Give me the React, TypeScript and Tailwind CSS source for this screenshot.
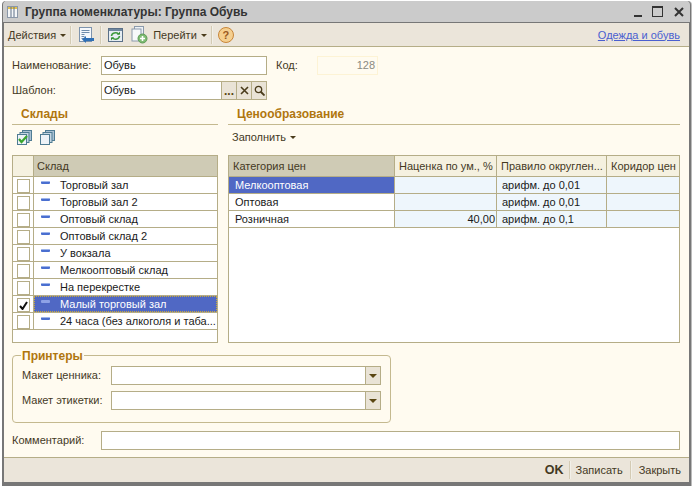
import * as React from "react";

const stores = [
  "Торговый зал",
  "Торговый зал 2",
  "Оптовый склад",
  "Оптовый склад 2",
  "У вокзала",
  "Мелкооптовый склад",
  "На перекрестке",
  "Малый торговый зал",
  "24 часа (без алкоголя и таба...",
];

const prices = [
  { name: "Мелкооптовая", markup: "", rule: "арифм. до 0,01" },
  { name: "Оптовая", markup: "", rule: "арифм. до 0,01" },
  { name: "Розничная", markup: "40,00", rule: "арифм. до 0,1" },
];

function Caret() {
  return <span className="inline-block ml-[4px] mb-[2px] border-x-[3px] border-t-[3px] border-x-transparent border-t-[#4a3c1c]" />;
}

function Sep() {
  return <span className="block w-[2px] h-[18px] bg-[#d4cbb4] border-r border-white/70" />;
}

function TitleIcon() {
  return (
    <svg width="11" height="12" viewBox="0 0 11 12">
      <rect x="0.5" y="0.5" width="10" height="11" fill="#f4f6f8" stroke="#8a97a8" />
      <rect x="1" y="1" width="9" height="2" fill="#e6c24a" />
      <path d="M4 1v10M7 1v10" stroke="#5f7088" />
    </svg>
  );
}

function ListArrowIcon() {
  return (
    <svg width="17" height="17" viewBox="0 0 17 17">
      <rect x="1.5" y="0.5" width="12" height="14" fill="#f5f8fc" stroke="#7d93ad" />
      <path d="M3.5 3.5h8M3.5 5.5h8M3.5 7.5h3M3.5 9.5h3M3.5 11.5h3" stroke="#6f8cab" />
      <path d="M4 12.5l4-3.5v2h8v3H8v2z" fill="#2f6fb5" />
    </svg>
  );
}

function RefreshIcon() {
  return (
    <svg width="15" height="14" viewBox="0 0 15 14">
      <rect x="0.5" y="0.5" width="14" height="13" fill="#e6edf3" stroke="#5b7088" />
      <rect x="1" y="1" width="13" height="2" fill="#6f879f" />
      <path d="M3.5 8a4 3.5 0 0 1 7-2" fill="none" stroke="#3c9a3c" strokeWidth="1.6" />
      <path d="M11.5 8a4 3.5 0 0 1-7 2" fill="none" stroke="#3c9a3c" strokeWidth="1.6" />
      <path d="M9 7l3-0.5 0-3zM6 9l-3 0.5 0 3z" fill="#2f8a2f" />
    </svg>
  );
}

function NewDocIcon() {
  return (
    <svg width="17" height="18" viewBox="0 0 17 18">
      <rect x="3.5" y="0.5" width="9" height="12" fill="#eef2f6" stroke="#8b9aab" />
      <rect x="1" y="3" width="9" height="12" fill="#f7f9fb" stroke="#8b9aab" />
      <circle cx="11.5" cy="12.5" r="4.5" fill="#7dbb72" stroke="#5d9a55" />
      <path d="M9 12.5h5M11.5 10v5" stroke="#fff" strokeWidth="1.6" />
    </svg>
  );
}

function HelpIcon() {
  return (
    <span className="w-[16px] h-[16px] rounded-full bg-[#f5cf8f] border border-[#c8863a] flex items-center justify-center text-[11px] font-bold text-[#9a5a1e] leading-none">
      ?
    </span>
  );
}

function StackIcon({ checked }: { checked?: boolean }) {
  return (
    <svg width="15" height="15" viewBox="0 0 15 15">
      <rect x="5.5" y="0.5" width="9" height="10" fill="#a9c0d2" stroke="#4f7c93" />
      <rect x="3" y="2.5" width="9" height="10" fill="#c5d6e2" stroke="#4f7c93" />
      <rect x="0.5" y="4.5" width="9" height="10" fill="#eef3f7" stroke="#4f7c93" />
      {checked && <path d="M2 9l2.5 3L10 6" fill="none" stroke="#3aa52f" strokeWidth="2.2" />}
    </svg>
  );
}

function Dash({ light }: { light?: boolean }) {
  return (
    <span
      className={`block shrink-0 w-[9px] h-[3px] mt-[-5px] rounded-[1px] ${light ? "bg-[#8ea2e6]" : "bg-[#4a6fd0] border-t border-[#9db4ea]"}`}
    />
  );
}

function Input({ className = "", value = "" }: { className?: string; value?: string }) {
  return (
    <div className={`h-[19px] bg-white border border-[#b5ad87] pl-[2px] flex items-center text-[#1a1a1a] ${className}`}>{value}</div>
  );
}

function SelectField({ label }: { label: string }) {
  return (
    <div className="flex items-center h-[19px]">
      <span className="w-[89px] shrink-0">{label}</span>
      <div className="w-[270px] h-[19px] bg-white border border-[#b5ad87] flex justify-end">
        <span className="w-[15px] bg-[#e9e3d6] border-l border-[#b5ad87] flex items-center justify-center">
          <span className="border-x-[4px] border-t-[4px] border-x-transparent border-t-[#5a4612]" />
        </span>
      </div>
    </div>
  );
}

export default function App() {
  return (
    <div
      className="w-[692px] h-[486px] bg-white pt-px pl-[2px] pr-px text-[11px] leading-none text-[#44391f]"
      style={{ fontFamily: '"Liberation Sans", Arial, sans-serif' }}
    >
      <div className="h-full flex flex-col rounded-t-[4px] bg-[#cbcbcb] border-x-[2px] border-b-[4px] border-[#777] border-t-0 shadow-[1px_0_0_#bbb]">
        <div className="h-[21px] -mx-[1px] bg-[#cbcbcb] flex items-center pl-[4px] pr-[6px] shrink-0 rounded-t-[4px]">
          <TitleIcon />
          <span className="ml-[7px] font-bold text-[12px] text-[#333]">Группа номенклатуры: Группа Обувь</span>
          <span className="ml-auto flex items-center text-[#333]">
            <span className="w-[8px] h-[2px] mt-[8px] mr-[10px] bg-[#333]" />
            <span className="w-[11px] h-[11px] mr-[11px] border border-t-2 border-[#333]" />
            <svg width="10" height="10" viewBox="0 0 10 10">
              <path d="M1 1l8 8M9 1l-8 8" stroke="#333" strokeWidth="2" />
            </svg>
          </span>
        </div>

        <div className="h-[25px] pt-px bg-[#ebe5da] border-y border-y-[#b5ad87] border-t-[#777] flex items-center pl-[4px] pr-[9px] shrink-0">
          <span>Действия<Caret /></span>
          <span className="ml-[4px]"><Sep /></span>
          <span className="ml-[6px] mr-[5px]"><ListArrowIcon /></span>
          <Sep />
          <span className="ml-[6px] mr-[8px]"><RefreshIcon /></span>
          <NewDocIcon />
          <span className="ml-[5px]">Перейти<Caret /></span>
          <span className="ml-[4px]"><Sep /></span>
          <span className="ml-[5px]"><HelpIcon /></span>
          <span className="ml-auto text-[#4a5fd0] underline">Одежда и обувь</span>
        </div>

        <div className="flex-1 min-h-0 bg-[#fffbf0] pt-[9px] pl-[8px] pr-[9px] flex flex-col">
          <div className="flex items-center h-[19px]">
            <span className="w-[89px] shrink-0">Наименование:</span>
            <Input className="w-[166px]" value="Обувь" />
            <span className="ml-[9px] w-[41px]">Код:</span>
            <div className="w-[61px] h-[19px] border border-[#fdf3d5] flex items-center justify-end pr-[2px] text-[#8a8a80]">128</div>
          </div>
          <div className="flex items-center h-[19px] mt-[6px]">
            <span className="w-[89px] shrink-0">Шаблон:</span>
            <div className="w-[166px] h-[19px] bg-white border border-[#b5ad87] flex">
              <span className="flex-1 pl-[2px] flex items-center text-[#1a1a1a]">Обувь</span>
              <span className="w-[15px] bg-[#e9e3d6] border-l border-[#b5ad87] flex items-end justify-center pb-[2px] font-bold text-[#5a4612] text-[12px]">...</span>
              <span className="w-[15px] bg-[#e9e3d6] border-l border-[#b5ad87] flex items-center justify-center">
                <svg width="9" height="9" viewBox="0 0 9 9"><path d="M1 1l7 7M8 1l-7 7" stroke="#4a3c1c" strokeWidth="1.6" /></svg>
              </span>
              <span className="w-[15px] bg-[#e9e3d6] border-l border-[#b5ad87] flex items-center justify-center">
                <svg width="11" height="11" viewBox="0 0 11 11" fill="none" stroke="#4a3c1c" strokeWidth="1.3"><circle cx="4.5" cy="4.5" r="3.2" /><path d="M7 7l3.5 3.5" strokeWidth="1.8" /></svg>
              </span>
            </div>
          </div>

          <div className="flex gap-[10px] mt-[7px] h-[236px]">
            <div className="w-[206px] flex flex-col">
              <div className="h-[18px] border-b border-[#c4b98f] pl-[9px] flex items-start pt-[1px] font-bold text-[12px] text-[#b0760e]">Склады</div>
              <div className="h-[24px] mb-[6px] flex items-center gap-[8px] pl-[5px]">
                <StackIcon checked />
                <StackIcon />
              </div>
              <div className="flex-1 bg-white border border-[#b5ad87]">
                <div className="flex h-[21px] border-b border-[#b5ad87]">
                  <span className="w-[21px] bg-[#f5f1e0] border-r border-[#b5ad87]" />
                  <span className="flex-1 bg-[#cfcbb5] flex items-center pl-[3px]">Склад</span>
                </div>
                {stores.map((s, i) => {
                  const sel = i === 7;
                  return (
                    <div key={s} className="flex h-[17px] border-b border-[#b5ad87] text-[#1a1a1a]">
                      <span className="w-[21px] border-r border-[#b5ad87] flex items-end justify-center shrink-0">
                        <span className="w-[13px] h-[14px] bg-white border border-[#b5ad87] flex items-center justify-center">
                          {sel && <svg width="9" height="9" viewBox="0 0 9 9"><path d="M1 5l2.5 3L8 1" fill="none" stroke="#111" strokeWidth="2" /></svg>}
                        </span>
                      </span>
                      <span className={`flex-1 flex items-center pl-[7px] min-w-0 whitespace-nowrap ${sel ? "bg-[#5068c4] text-white outline-1 outline-dotted -outline-offset-1 outline-[#c9a93c]" : ""}`}>
                        <Dash light={sel} />
                        <span className="ml-[10px]">{s}</span>
                      </span>
                    </div>
                  );
                })}
              </div>
            </div>

            <div className="flex-1 flex flex-col min-w-0">
              <div className="h-[18px] border-b border-[#c4b98f] pl-[9px] flex items-start pt-[1px] font-bold text-[12px] text-[#b0760e]">Ценообразование</div>
              <div className="h-[24px] mb-[6px] flex items-center pl-[4px]">
                <span>Заполнить<Caret /></span>
              </div>
              <div className="flex-1 bg-white border border-[#b5ad87]">
                <div className="flex h-[21px] border-b border-[#b5ad87]">
                  <span className="w-[166px] bg-[#cfcbb5] border-r border-[#b5ad87] flex items-center pl-[4px]">Категория цен</span>
                  <span className="w-[102px] bg-[#f5f1e0] border-r border-[#b5ad87] flex items-center pl-[4px] whitespace-nowrap">Наценка по ум., %</span>
                  <span className="w-[110px] bg-[#f5f1e0] border-r border-[#b5ad87] flex items-center pl-[4px] whitespace-nowrap">Правило округлен...</span>
                  <span className="flex-1 bg-[#f5f1e0] flex items-center pl-[4px] whitespace-nowrap">Коридор цен</span>
                </div>
                {prices.map((p, i) => (
                  <div key={p.name} className="flex h-[17px] border-b border-[#b5ad87] text-[#1a1a1a]">
                    <span className={`w-[166px] border-r border-[#b5ad87] flex items-center pl-[6px] ${i === 0 ? "bg-[#5068c4] text-white" : ""}`}>{p.name}</span>
                    <span className="w-[102px] bg-[#eef6fc] border-r border-[#b5ad87] flex items-center justify-end pr-[1px]">{p.markup}</span>
                    <span className="w-[110px] bg-[#eef6fc] border-r border-[#b5ad87] flex items-center pl-[5px]">{p.rule}</span>
                    <span className="flex-1 bg-[#eef6fc]" />
                  </div>
                ))}
              </div>
            </div>
          </div>

          <div className="relative w-[379px] h-[68px] mt-[12px] border border-[#c4b98f] rounded-[4px] pl-[9px] pt-[10px] flex flex-col gap-[6px]">
            <span className="absolute left-[8px] top-[-6px] px-[1px] bg-[#fffbf0] font-bold text-[12px] text-[#b0760e]">Принтеры</span>
            <SelectField label="Макет ценника:" />
            <SelectField label="Макет этикетки:" />
          </div>

          <div className="flex items-center mt-[8px] h-[19px]">
            <span className="w-[89px] shrink-0">Комментарий:</span>
            <Input className="flex-1" />
          </div>
        </div>

        <div className="h-[25px] bg-[#ebe5da] border-t border-[#b5ad87] flex items-center justify-end pr-[8px] shrink-0">
          <span className="font-bold text-[12.5px]">OK</span>
          <span className="mx-[5px]"><Sep /></span>
          <span>Записать</span>
          <span className="mx-[7px]"><Sep /></span>
          <span>Закрыть</span>
        </div>
      </div>
    </div>
  );
}
